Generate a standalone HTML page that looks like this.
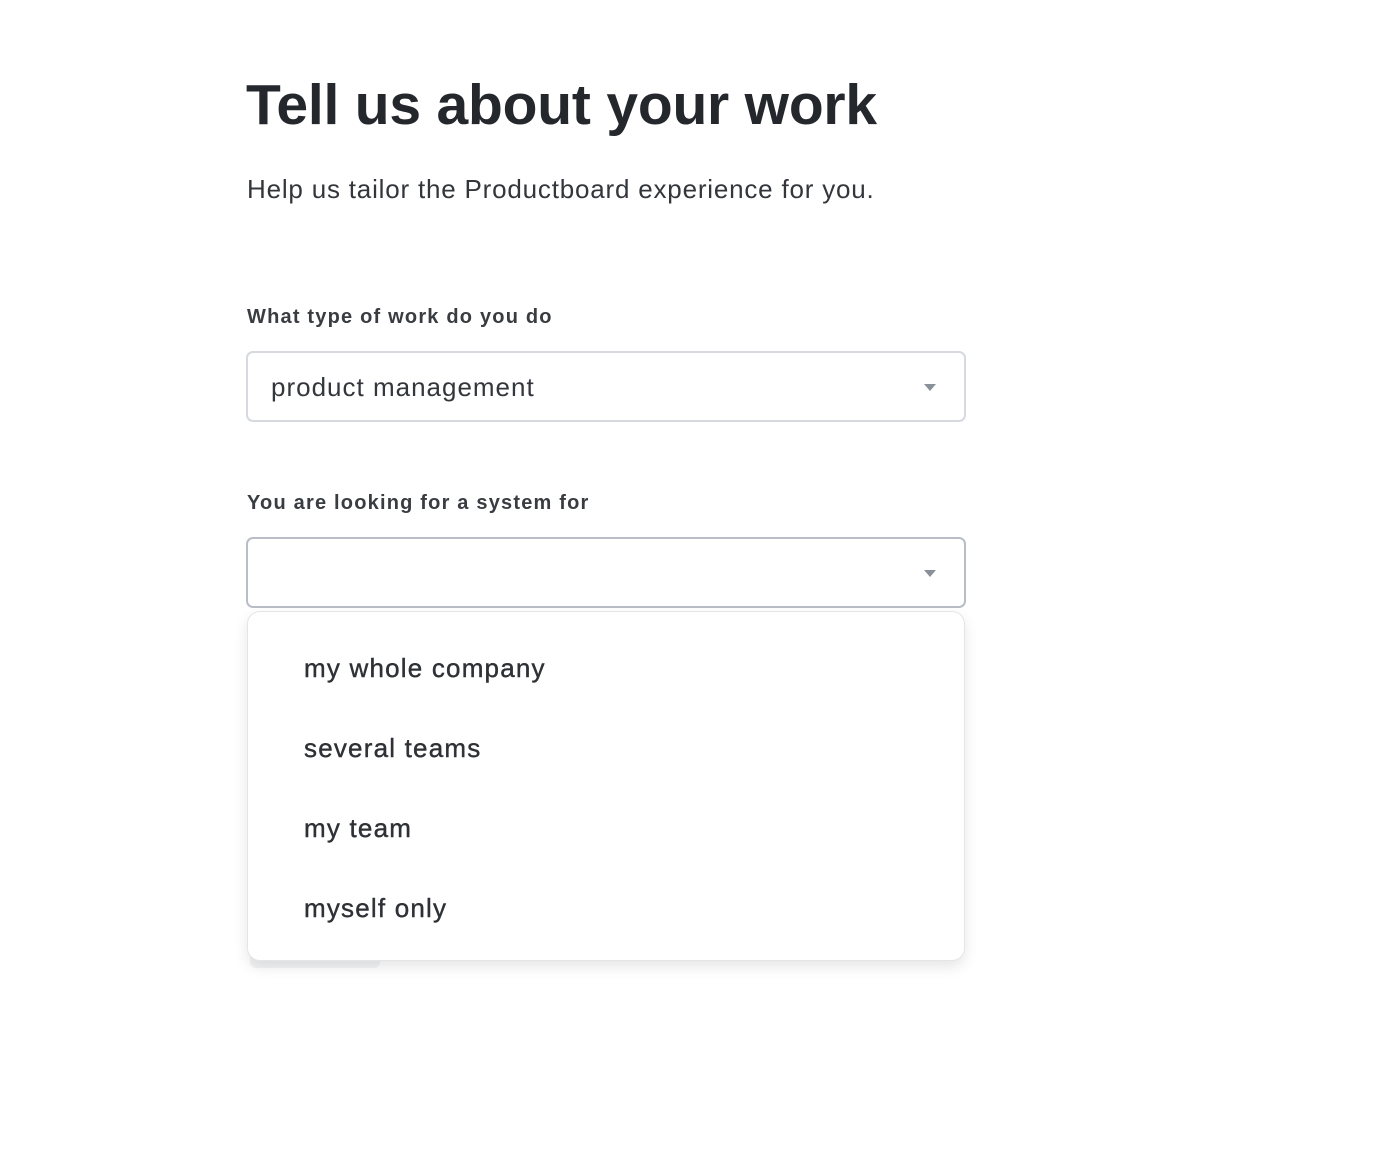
<!DOCTYPE html>
<html><head><meta charset="utf-8"><style>
*{margin:0;padding:0;box-sizing:border-box}
body{width:1388px;height:1172px;background:#fff;font-family:"Liberation Sans",Arial,sans-serif;color:#24272c;position:relative;overflow:hidden}
.a{position:absolute;white-space:nowrap}
h1{position:absolute;left:246px;top:70px;font-size:57px;font-weight:bold;letter-spacing:-0.2px;line-height:70px}
.sub{left:247px;top:173px;font-size:26px;letter-spacing:0.8px;line-height:32px;color:#33363b}
.lbl{left:247px;font-size:20px;font-weight:bold;letter-spacing:1.2px;color:#393c41;line-height:26px}
.box{position:absolute;left:246px;width:720px;height:71px;border:2px solid #d6d9de;border-radius:7px;background:#fff}
.box .t{position:absolute;left:23px;top:19px;font-size:26px;letter-spacing:1px;color:#33363b}
.tri{position:absolute;right:28px;top:31px;width:0;height:0;border-left:6px solid transparent;border-right:6px solid transparent;border-top:7px solid #8a9099}
.dd{position:absolute;left:247px;top:611px;width:718px;height:350px;border:1px solid #e3e5e8;border-radius:13px;background:#fff;box-shadow:0 6px 14px rgba(0,0,0,0.10)}
.it{left:304px;font-size:26px;letter-spacing:1.2px;color:#2e3136;line-height:32px;-webkit-text-stroke:0.4px #2e3136}
</style></head><body>
<h1>Tell us about your work</h1>
<div class="a sub">Help us tailor the Productboard experience for you.</div>
<div class="a lbl" style="top:304px">What type of work do you do</div>
<div class="box" style="top:351px"><span class="a t">product management</span><div class="tri"></div></div>
<div class="a lbl" style="top:490px">You are looking for a system for</div>
<div class="box" style="top:537px;border-color:#b9bec6"><div class="tri"></div></div>
<div style="position:absolute;left:250px;top:950px;width:130px;height:18px;background:#f3f4f5;border-radius:6px"></div>
<div class="dd"></div>
<div class="a it" style="top:652px">my whole company</div>
<div class="a it" style="top:732px">several teams</div>
<div class="a it" style="top:812px">my team</div>
<div class="a it" style="top:892px">myself only</div>
</body></html>
